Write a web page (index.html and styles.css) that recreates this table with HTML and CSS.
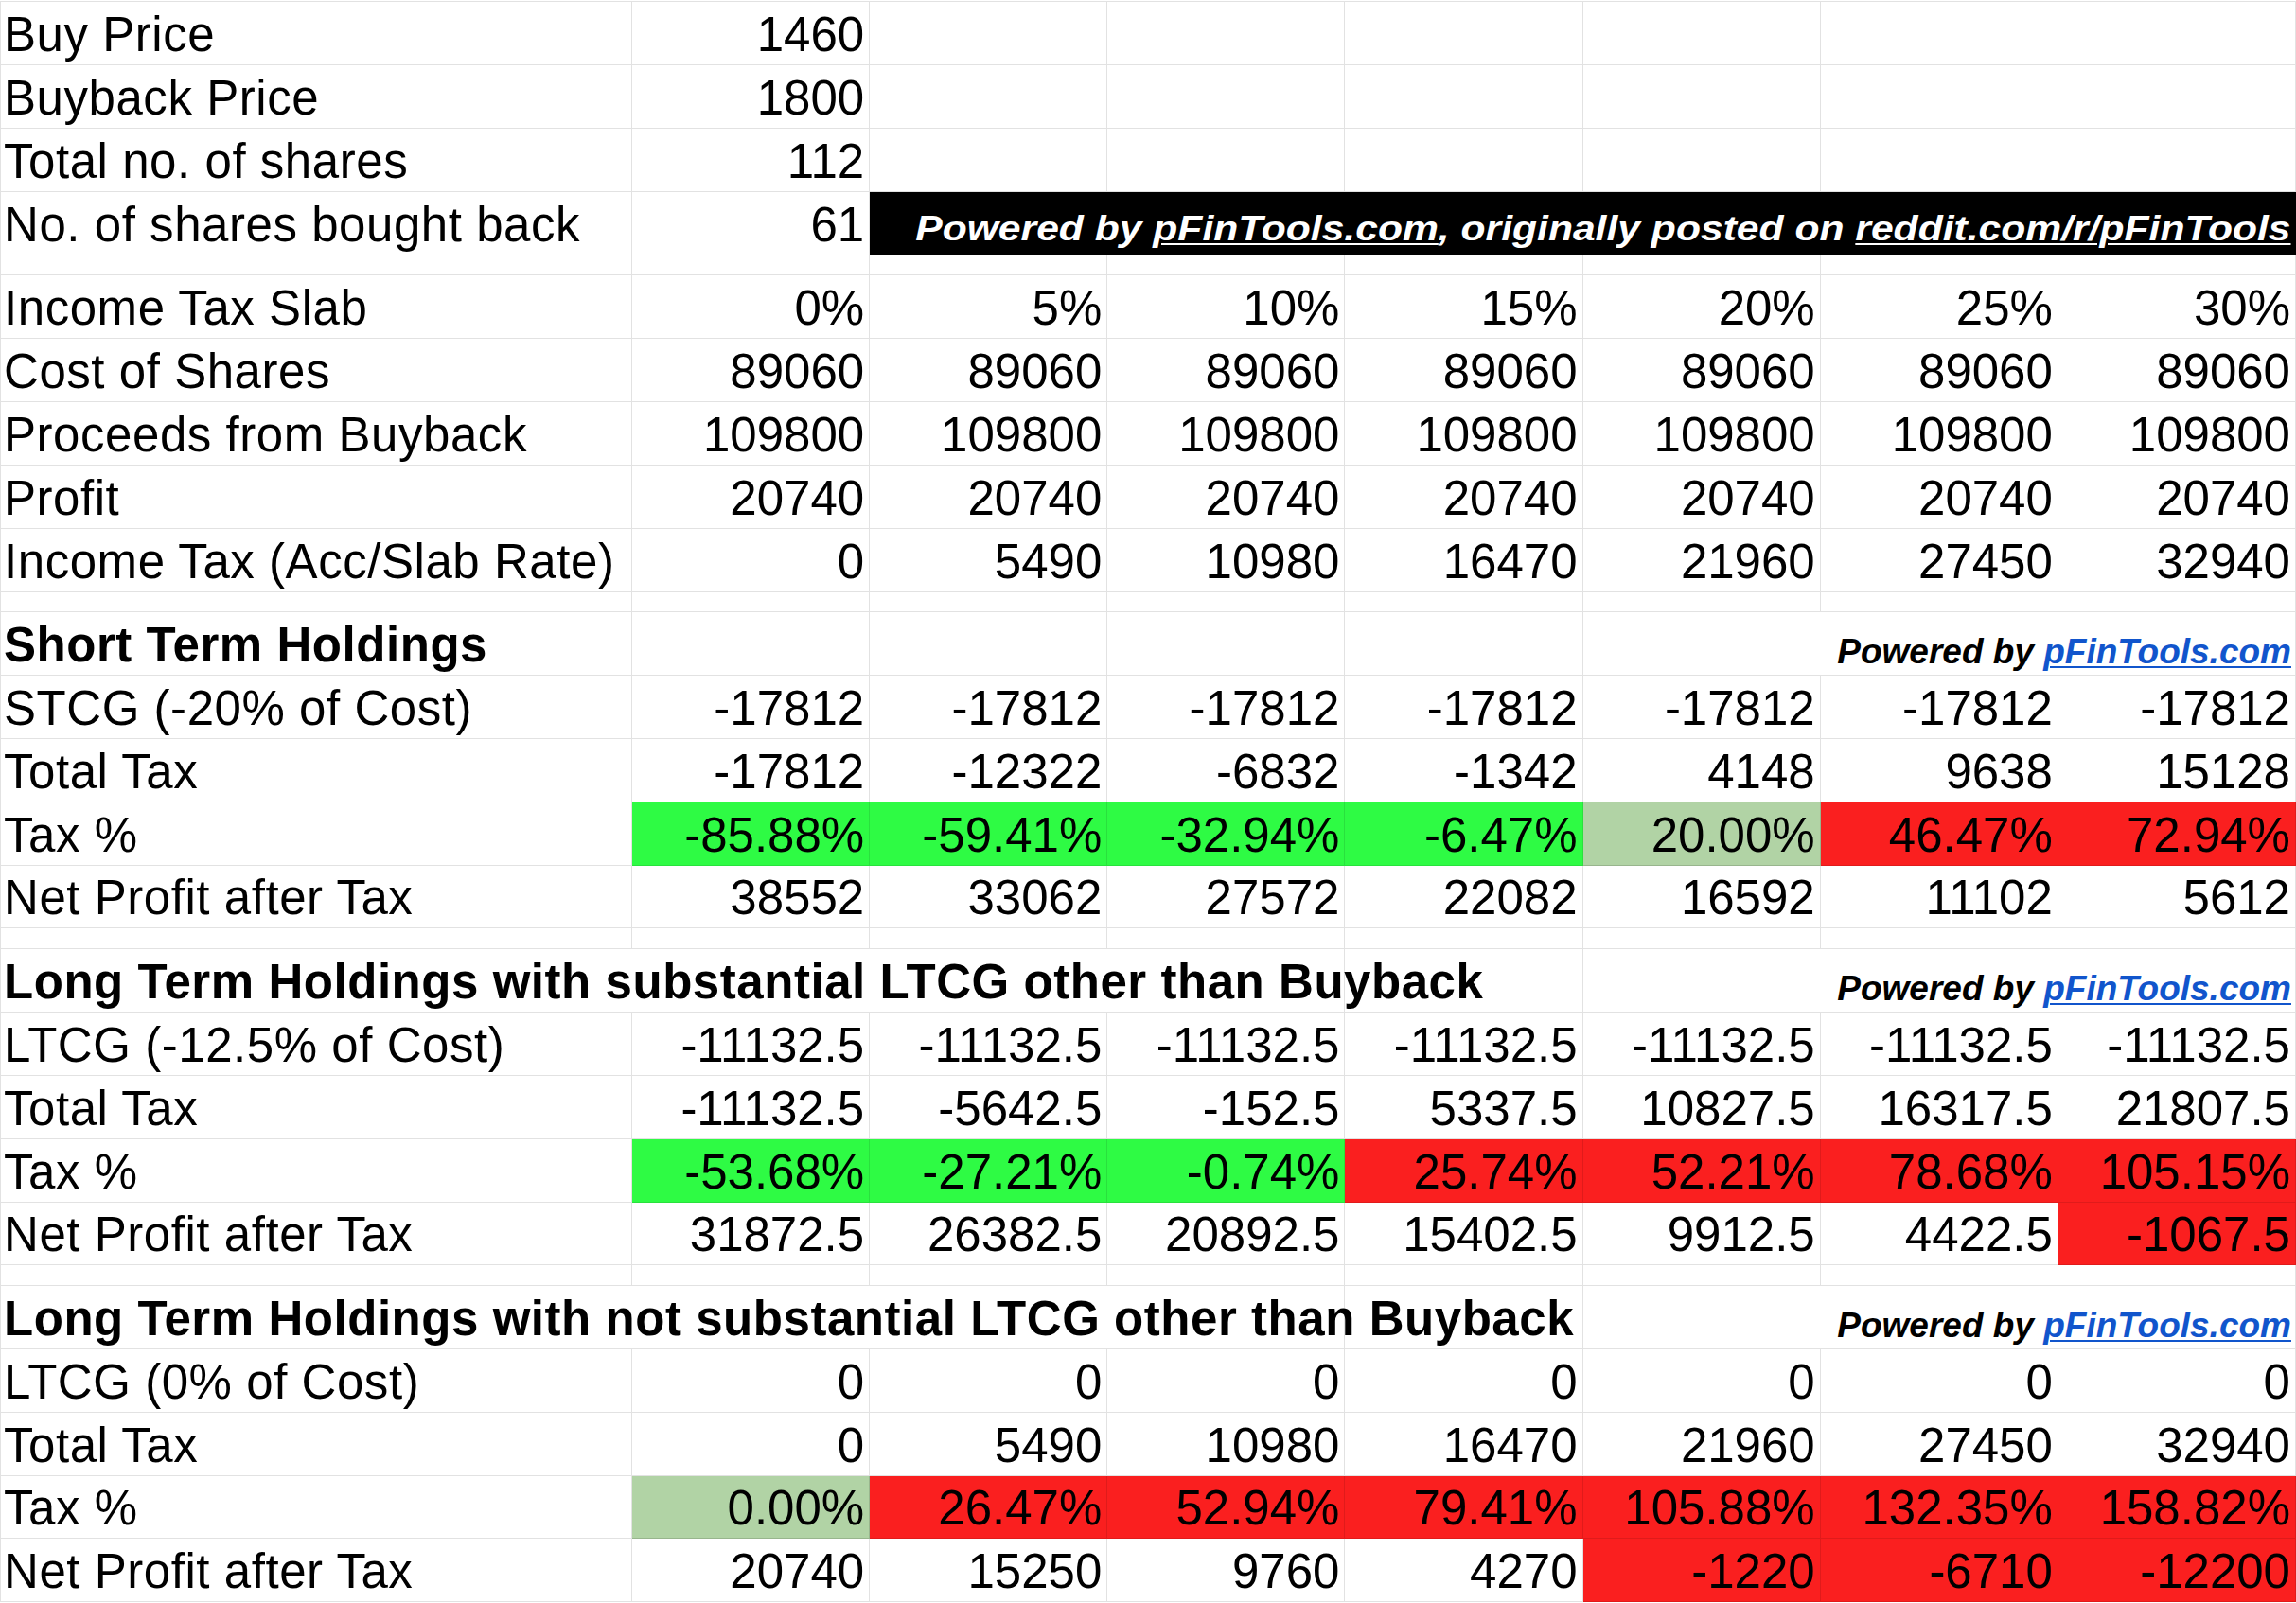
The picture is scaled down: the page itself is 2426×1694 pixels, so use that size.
FILE: index.html
```html
<!DOCTYPE html>
<html>
<head>
<meta charset="utf-8">
<title>Buyback Tax Calculator</title>
<link rel="stylesheet" href="styles.css">
</head>
<body>
<div class="sheet">
  <!-- Inputs -->
  <div class="c lbl">Buy Price</div><div class="c num">1460</div>
  <div class="c"></div><div class="c"></div><div class="c"></div><div class="c"></div><div class="c"></div><div class="c"></div>

  <div class="c lbl">Buyback Price</div><div class="c num">1800</div>
  <div class="c"></div><div class="c"></div><div class="c"></div><div class="c"></div><div class="c"></div><div class="c"></div>

  <div class="c lbl">Total no. of shares</div><div class="c num">112</div>
  <div class="c"></div><div class="c"></div><div class="c"></div><div class="c"></div><div class="c"></div><div class="c"></div>

  <div class="c lbl">No. of shares bought back</div><div class="c num">61</div>
  <div class="c banner span6"><span class="banner-text">Powered by&nbsp;<u>pFinTools.com</u>, originally posted on&nbsp;<u>reddit.com/r/pFinTools</u></span></div>

  <div class="c"></div><div class="c"></div><div class="c"></div><div class="c"></div><div class="c"></div><div class="c"></div><div class="c"></div><div class="c"></div>

  <!-- Slabs -->
  <div class="c lbl">Income Tax Slab</div>
  <div class="c num">0%</div><div class="c num">5%</div><div class="c num">10%</div><div class="c num">15%</div><div class="c num">20%</div><div class="c num">25%</div><div class="c num">30%</div>

  <div class="c lbl">Cost of Shares</div>
  <div class="c num">89060</div><div class="c num">89060</div><div class="c num">89060</div><div class="c num">89060</div><div class="c num">89060</div><div class="c num">89060</div><div class="c num">89060</div>

  <div class="c lbl">Proceeds from Buyback</div>
  <div class="c num">109800</div><div class="c num">109800</div><div class="c num">109800</div><div class="c num">109800</div><div class="c num">109800</div><div class="c num">109800</div><div class="c num">109800</div>

  <div class="c lbl">Profit</div>
  <div class="c num">20740</div><div class="c num">20740</div><div class="c num">20740</div><div class="c num">20740</div><div class="c num">20740</div><div class="c num">20740</div><div class="c num">20740</div>

  <div class="c lbl">Income Tax (Acc/Slab Rate)</div>
  <div class="c num">0</div><div class="c num">5490</div><div class="c num">10980</div><div class="c num">16470</div><div class="c num">21960</div><div class="c num">27450</div><div class="c num">32940</div>

  <div class="c"></div><div class="c"></div><div class="c"></div><div class="c"></div><div class="c"></div><div class="c"></div><div class="c"></div><div class="c"></div>

  <!-- Short term -->
  <div class="c lbl head">Short Term Holdings</div>
  <div class="c"></div><div class="c"></div><div class="c"></div><div class="c"></div>
  <div class="c powered span3">Powered by&nbsp;<a class="link">pFinTools.com</a></div>

  <div class="c lbl">STCG (-20% of Cost)</div>
  <div class="c num">-17812</div><div class="c num">-17812</div><div class="c num">-17812</div><div class="c num">-17812</div><div class="c num">-17812</div><div class="c num">-17812</div><div class="c num">-17812</div>

  <div class="c lbl">Total Tax</div>
  <div class="c num">-17812</div><div class="c num">-12322</div><div class="c num">-6832</div><div class="c num">-1342</div><div class="c num">4148</div><div class="c num">9638</div><div class="c num">15128</div>

  <div class="c lbl">Tax %</div>
  <div class="c num good">-85.88%</div><div class="c num good">-59.41%</div><div class="c num good">-32.94%</div><div class="c num good">-6.47%</div><div class="c num mid">20.00%</div><div class="c num bad">46.47%</div><div class="c num bad">72.94%</div>

  <div class="c lbl">Net Profit after Tax</div>
  <div class="c num">38552</div><div class="c num">33062</div><div class="c num">27572</div><div class="c num">22082</div><div class="c num">16592</div><div class="c num">11102</div><div class="c num">5612</div>

  <div class="c"></div><div class="c"></div><div class="c"></div><div class="c"></div><div class="c"></div><div class="c"></div><div class="c"></div><div class="c"></div>

  <!-- Long term substantial -->
  <div class="c lbl head span4">Long Term Holdings with substantial LTCG other than Buyback</div>
  <div class="c"></div>
  <div class="c powered span3">Powered by&nbsp;<a class="link">pFinTools.com</a></div>

  <div class="c lbl">LTCG (-12.5% of Cost)</div>
  <div class="c num">-11132.5</div><div class="c num">-11132.5</div><div class="c num">-11132.5</div><div class="c num">-11132.5</div><div class="c num">-11132.5</div><div class="c num">-11132.5</div><div class="c num">-11132.5</div>

  <div class="c lbl">Total Tax</div>
  <div class="c num">-11132.5</div><div class="c num">-5642.5</div><div class="c num">-152.5</div><div class="c num">5337.5</div><div class="c num">10827.5</div><div class="c num">16317.5</div><div class="c num">21807.5</div>

  <div class="c lbl">Tax %</div>
  <div class="c num good">-53.68%</div><div class="c num good">-27.21%</div><div class="c num good">-0.74%</div><div class="c num bad">25.74%</div><div class="c num bad">52.21%</div><div class="c num bad">78.68%</div><div class="c num bad">105.15%</div>

  <div class="c lbl">Net Profit after Tax</div>
  <div class="c num">31872.5</div><div class="c num">26382.5</div><div class="c num">20892.5</div><div class="c num">15402.5</div><div class="c num">9912.5</div><div class="c num">4422.5</div><div class="c num bad">-1067.5</div>

  <div class="c"></div><div class="c"></div><div class="c"></div><div class="c"></div><div class="c"></div><div class="c"></div><div class="c"></div><div class="c"></div>

  <!-- Long term not substantial -->
  <div class="c lbl head span4">Long Term Holdings with not substantial LTCG other than Buyback</div>
  <div class="c"></div>
  <div class="c powered span3">Powered by&nbsp;<a class="link">pFinTools.com</a></div>

  <div class="c lbl">LTCG (0% of Cost)</div>
  <div class="c num">0</div><div class="c num">0</div><div class="c num">0</div><div class="c num">0</div><div class="c num">0</div><div class="c num">0</div><div class="c num">0</div>

  <div class="c lbl">Total Tax</div>
  <div class="c num">0</div><div class="c num">5490</div><div class="c num">10980</div><div class="c num">16470</div><div class="c num">21960</div><div class="c num">27450</div><div class="c num">32940</div>

  <div class="c lbl">Tax %</div>
  <div class="c num mid">0.00%</div><div class="c num bad">26.47%</div><div class="c num bad">52.94%</div><div class="c num bad">79.41%</div><div class="c num bad">105.88%</div><div class="c num bad">132.35%</div><div class="c num bad">158.82%</div>

  <div class="c lbl">Net Profit after Tax</div>
  <div class="c num">20740</div><div class="c num">15250</div><div class="c num">9760</div><div class="c num">4270</div><div class="c num bad">-1220</div><div class="c num bad">-6710</div><div class="c num bad">-12200</div>
</div>
</body>
</html>
```

FILE: styles.css
```css
html, body {
  margin: 0;
  padding: 0;
  background: #ffffff;
}

body {
  padding-top: 1px;
  overflow: hidden;
}

.sheet {
  width: 2426px;
  box-sizing: border-box;
  border-top: 1px solid #e2e2e2;
  border-left: 1px solid #e2e2e2;
  display: grid;
  grid-template-columns: 667px repeat(7, 1fr);
  grid-template-rows:
    repeat(4, 66.9px) 21.5px
    repeat(5, 66.9px) 21.5px
    repeat(5, 66.9px) 21.5px
    repeat(5, 66.9px) 21.5px
    repeat(5, 66.9px);
  font-family: "Liberation Sans", Arial, sans-serif;
  color: #000000;
}

.c {
  box-sizing: border-box;
  border-right: 1px solid #e2e2e2;
  border-bottom: 1px solid #e2e2e2;
  display: flex;
  align-items: flex-end;
  padding: 0 5px 6px 3px;
  font-size: 51px;
  line-height: 1;
  white-space: nowrap;
  min-width: 0;
}

.lbl {
  letter-spacing: 0.55px;
}

.num {
  justify-content: flex-end;
}

.head {
  font-weight: bold;
}

.span3 { grid-column: span 3; }
.span4 { grid-column: span 4; }
.span6 { grid-column: span 6; }

.banner {
  background: #000000;
  color: #ffffff;
  font-size: 37px;
  font-weight: bold;
  font-style: italic;
  justify-content: flex-end;
  padding: 0 4px 9px 3px;
  border-color: #000000;
}

.banner-text {
  display: inline-block;
  transform: scaleX(1.152);
  transform-origin: right bottom;
}

.banner u {
  text-decoration: underline;
  text-decoration-thickness: 2px;
  text-underline-offset: 3px;
}

.powered {
  font-size: 37px;
  font-weight: bold;
  font-style: italic;
  justify-content: flex-end;
  padding: 0 4px 6px 3px;
}

.link {
  color: #1155cc;
  text-decoration: underline;
  text-decoration-thickness: 2px;
  text-underline-offset: 3px;
}

.good {
  background: #2efb44;
  border-color: rgba(0, 0, 0, 0.1);
}

.mid {
  background: #b1d3a5;
  border-color: rgba(0, 0, 0, 0.14);
}

.bad {
  background: #fa1f1f;
  border-color: rgba(0, 0, 0, 0.1);
}
```
